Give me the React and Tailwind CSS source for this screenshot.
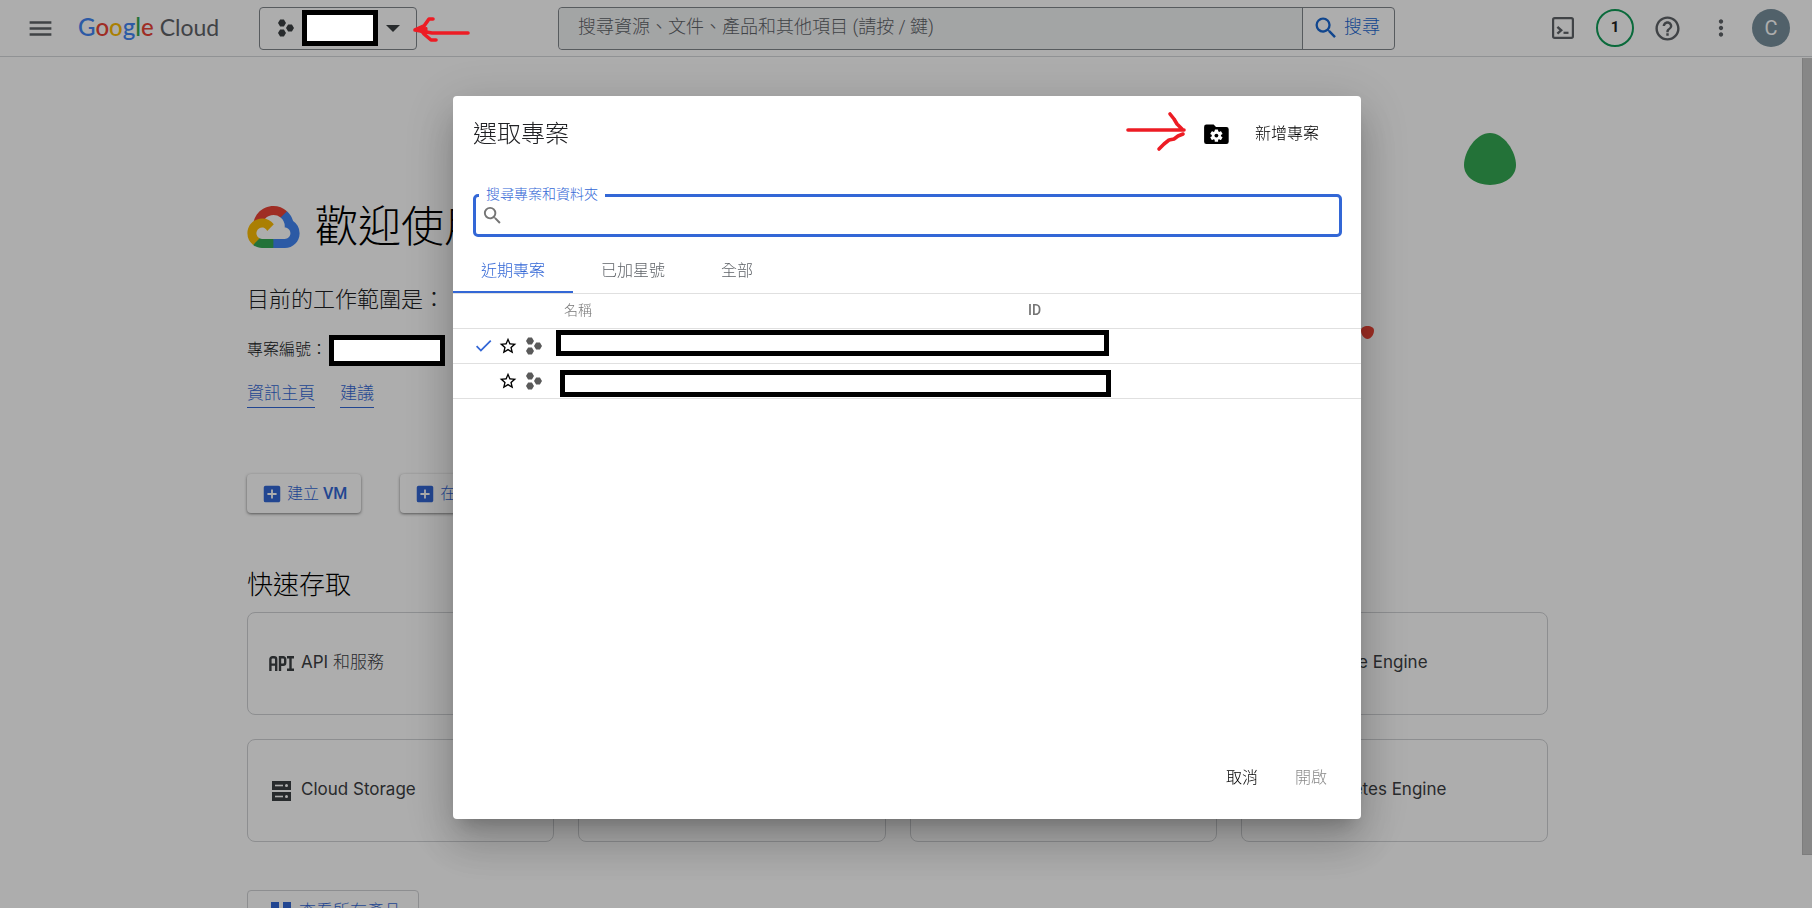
import React from 'react';
import {
  MdMenu,
  MdSearch,
  MdHelpOutline,
  MdMoreVert,
  MdAddBox,
  MdCheck,
  MdStarBorder,
} from 'react-icons/md';

const BLACK_BOX = 'block shrink-0 border-[5px] border-black bg-white';

function HexIcon({ className }) {
  return (
    <svg viewBox="0 0 16 18" className={className} fill="currentColor" aria-hidden="true">
      <path d="M2.1.4h3.8L8 4 5.9 7.6H2.1L0 4z" />
      <path d="M10.1 5.4h3.8L16 9l-2.1 3.6h-3.8L8 9z" />
      <path d="M2.1 10.4h3.8L8 14l-2.1 3.6H2.1L0 14z" />
    </svg>
  );
}

function TerminalIcon() {
  return (
    <svg viewBox="0 0 22 22" className="size-[22px]" fill="none" stroke="currentColor" aria-hidden="true">
      <rect x="1.1" y="1.1" width="19.8" height="19.8" rx="1.6" strokeWidth="2.2" />
      <path d="M5.4 9.8 9.2 13.3 5.4 16.6" strokeWidth="2.4" />
      <path d="M11.5 15.8h5" strokeWidth="2.2" />
    </svg>
  );
}

function FolderGearIcon() {
  return (
    <svg viewBox="0 0 25 21" className="h-[21px] w-[25px]" aria-hidden="true">
      <path d="M2.4.6h7.2L12 3h10.4a2.3 2.3 0 0 1 2.3 2.3v12.4a2.3 2.3 0 0 1-2.3 2.3H2.4A2.3 2.3 0 0 1 .1 17.7V2.9A2.3 2.3 0 0 1 2.4.6z" />
      <g transform="translate(12.4 11.6)" fill="#fff">
        <circle r="4.6" />
        {[0, 60, 120].map((a) => (
          <rect key={a} x="-1.7" y="-6.2" width="3.4" height="12.4" rx="0.5" transform={`rotate(${a})`} />
        ))}
        <circle r="1.9" fill="#000" />
      </g>
    </svg>
  );
}

function CloudLogo() {
  return (
    <svg viewBox="0 0 256 206" className="h-[42px] w-[53px] shrink-0" aria-hidden="true">
      <path fill="#EA4335" d="m170.252 56.819 22.253-22.253 1.483-9.370C153.437-11.677 88.976-7.496 52.420 33.920 42.267 45.423 34.734 59.764 30.717 74.573l7.970-1.123 44.505-7.340 3.436-3.513c19.797-21.742 53.270-24.667 76.128-6.168l7.496.390z" />
      <path fill="#4285F4" d="M224.205 73.918a100.249 100.249 0 0 0-30.217-48.722l-31.232 31.232a55.515 55.515 0 0 1 20.379 44.037v5.544c15.350 0 27.797 12.450 27.797 27.796 0 15.352-12.446 27.573-27.797 27.573h-55.671l-5.466 5.934v33.340l5.466 5.231h55.670c39.930.311 72.553-31.494 72.864-71.424a72.303 72.303 0 0 0-31.793-60.541" />
      <path fill="#34A853" d="M71.870 205.796h55.593V161.290H71.870a27.275 27.275 0 0 1-11.480-2.500l-7.887 2.420-22.409 22.253-1.952 7.574c12.567 9.489 27.980 14.825 43.728 14.759" />
      <path fill="#FBBC05" d="M71.870 61.425C31.943 61.663-.237 94.228.001 134.153a72.301 72.301 0 0 0 28.222 56.880l32.248-32.246c-13.990-6.322-20.208-22.786-13.887-36.776 6.320-13.990 22.786-20.208 36.775-13.888a27.796 27.796 0 0 1 13.887 13.888l32.248-32.248A72.224 72.224 0 0 0 71.870 61.425" />
    </svg>
  );
}

function ApiIcon() {
  return (
    <svg viewBox="0 0 25 15" className="h-[15px] w-[25px]" fill="none" stroke="currentColor" strokeWidth="2.4" aria-hidden="true">
      <path d="M1.4 15V3.2a2 2 0 0 1 2-2h1.8a2 2 0 0 1 2 2V15M1.400 8.600h5.800" />
      <path d="M11 15V1.200h3.200a2 2 0 0 1 2 2v3.600a2 2 0 0 1-2 2H11" />
      <path d="M18 1.200h7M18 13.800h7M21.500 1.200v12.600" />
    </svg>
  );
}

function StorageIcon() {
  return (
    <svg viewBox="0 0 19 20" className="h-5 w-[19px]" aria-hidden="true">
      {[0, 11].map((y) => (
        <g key={y}>
          <path fill="currentColor" d={`M0 ${y}h19v9H0z`} />
          <path fill="#fff" d={`M3 ${y + 3.7}h8v1.6H3z`} />
          <circle fill="#fff" cx="14.5" cy={y + 4.5} r="1.5" />
        </g>
      ))}
    </svg>
  );
}

function Header() {
  return (
    <header className="flex h-[57px] shrink-0 items-center border-b border-[#d5d7da] pr-[22px] pl-[26px] text-[#5f6368]">
      <button type="button" aria-label="選單">
        <MdMenu className="size-[29px]" />
      </button>
      <a href="#" className="ml-[23px] flex w-[181px] items-baseline gap-[6px] pb-[3px] font-['Lato'] text-[24px] leading-8">
        <span className="font-medium">
          <span className="text-[#4285f4]">G</span>
          <span className="text-[#ea4335]">o</span>
          <span className="text-[#fbbc05]">o</span>
          <span className="text-[#4285f4]">g</span>
          <span className="text-[#34a853]">l</span>
          <span className="text-[#ea4335]">e</span>
        </span>
        <span className="text-[23px]">Cloud</span>
      </a>
      <button
        type="button"
        aria-label="選取專案"
        className="relative flex h-[43px] w-[158px] shrink-0 items-center rounded border border-[#80868b] pl-[18px] text-[#3c4043]"
      >
        <HexIcon className="h-[18px] w-4" />
        <span className={`${BLACK_BOX} relative z-20 ml-2 h-9 w-[76px]`} />
        <svg viewBox="0 0 14 7" className="ml-2 h-[7px] w-[14px]" fill="currentColor" aria-hidden="true">
          <path d="M0 0h14L7 7z" />
        </svg>
        <svg
          viewBox="0 0 60 28"
          className="absolute top-2 left-[152px] z-20 h-7 w-[60px]"
          fill="none"
          stroke="#ed1c24"
          strokeWidth="3.6"
          strokeLinecap="round"
          strokeLinejoin="round"
          aria-hidden="true"
        >
          <path d="M56 17 20 17 3 14 12 10M21 3 17 3 12 10 8 13 12 18 19 24 24 24" />
          <path d="M8 11v5l7 1v-5z" fill="#ed1c24" strokeWidth="1" />
        </svg>
      </button>
      <form className="ml-[141px] flex h-[43px] w-[837px] shrink rounded border border-[#80868b]">
        <input
          type="text"
          aria-label="搜尋資源"
          placeholder="搜尋資源、文件、產品和其他項目 (請按 / 鍵)"
          className="min-w-0 flex-1 rounded-l bg-[#f1f3f4] px-[19px] pb-1 text-[18px] font-light outline-none placeholder:text-[#5f6368]"
        />
        <button
          type="button"
          className="flex w-[92px] items-center gap-1 border-l border-[#80868b] pb-px pl-[9px] text-[18px] font-light text-[#1967d2]"
        >
          <MdSearch className="size-7 shrink-0" />
          <span className="pb-[2px]">搜尋</span>
        </button>
      </form>
      <div className="ml-auto flex items-center">
        <button type="button" aria-label="Cloud Shell">
          <TerminalIcon />
        </button>
        <button
          type="button"
          aria-label="通知"
          className="ml-[22px] size-[38px] rounded-full border-2 border-[#0f9d58] pb-px text-[15px] font-bold text-[#202124]"
        >
          1
        </button>
        <button type="button" aria-label="說明" className="ml-[19px]">
          <MdHelpOutline className="size-[29px]" />
        </button>
        <button type="button" aria-label="更多" className="ml-[26px]">
          <MdMoreVert className="size-[26px]" />
        </button>
        <button
          type="button"
          aria-label="帳戶"
          className="ml-[18px] size-[38px] rounded-full bg-[#78909c] text-[20px] text-white"
        >
          C
        </button>
      </div>
    </header>
  );
}

function ActionButton({ children }) {
  return (
    <button
      type="button"
      className="flex h-[39px] items-center gap-1 rounded px-[14px] text-[16px] font-light whitespace-nowrap text-[#3367d6] shadow-[0_1px_3px_rgba(0,0,0,0.5)]"
    >
      <MdAddBox className="size-[22px]" />
      <span>{children}</span>
    </button>
  );
}

const CARDS = [
  { icon: 'api', label: 'API', suffix: '和服務' },
  { label: 'BigQuery' },
  { label: 'SQL' },
  { label: 'Compute Engine' },
  { icon: 'storage', label: 'Cloud Storage' },
  { label: 'VPC', suffix: '網路' },
  { label: 'Cloud Run' },
  { label: 'Kubernetes Engine' },
];

function Card({ icon, label, suffix }) {
  return (
    <a
      href="#"
      className="flex h-[103px] items-center rounded-lg border border-[#d0d2d5] pl-[21px] text-[#3c4043]"
    >
      <span className="flex w-8 justify-start">
        {icon === 'api' && <ApiIcon />}
        {icon === 'storage' && <span className="ml-[3px]"><StorageIcon /></span>}
      </span>
      <span className="pb-1 font-['Inter','Noto_Sans_CJK_TC',sans-serif] text-[17px] leading-6">
        {label}
        {suffix && <span className="font-light"> {suffix}</span>}
      </span>
    </a>
  );
}

function Page() {
  return (
    <main className="relative flex-1 overflow-hidden pr-[7px]">
      <div className="mx-auto w-full max-w-[1301px]">
        <div className="flex items-center gap-[15px] pt-[138px]">
          <CloudLogo />
          <h1 className="text-[43px] leading-[64px] font-light text-black">歡迎使用</h1>
        </div>
        <p className="mt-[25px] text-[22px] leading-8 font-light text-[#202124]">目前的工作範圍是：</p>
        <div className="mt-[18px] flex h-8 items-center text-[16px] font-light text-[#202124]">
          <span className="w-[82px] whitespace-nowrap">專案編號：</span>
          <span className={`${BLACK_BOX} relative z-20 h-[31px] w-[116px]`} />
        </div>
        <div className="mt-[13px] flex gap-[25px] text-[17px] leading-7 font-light text-[#3367d6]">
          <a href="#" className="border-b border-[#3367d6]">資訊主頁</a>
          <a href="#" className="border-b border-[#3367d6]">建議</a>
        </div>
        <div className="mt-[66px] flex gap-[39px]">
          <ActionButton>建立 <b className="font-medium">VM</b></ActionButton>
          <ActionButton>在 <b className="font-medium">BigQuery</b> 中執行查詢</ActionButton>
        </div>
        <h2 className="mt-[52px] text-[26px] leading-10 font-light text-black">快速存取</h2>
        <div className="mt-[7px] grid grid-cols-4 gap-6">
          {CARDS.map((c) => (
            <Card key={c.label} {...c} />
          ))}
        </div>
        <a
          href="#"
          className="mt-12 inline-flex h-11 items-center gap-2 rounded border border-[#d0d2d5] pr-[17px] pl-[23px] text-[17px] font-light whitespace-nowrap text-[#3367d6]"
        >
          <svg viewBox="0 0 20 20" className="size-5" fill="currentColor" aria-hidden="true">
            <path d="M0 0h8v8H0zM12 0h8v8h-8zM0 12h8v8H0zM12 12h8v8h-8z" />
          </svg>
          查看所有產品
        </a>
      </div>
      <svg viewBox="0 0 51 51" className="absolute top-[76px] left-[1464px] size-[52px]" aria-hidden="true">
        <path fill="#34a853" d="M25.5 0C39 0 51 18 51 31.500 51 43.500 39 51 25.500 51S0 43.500 0 31.500C0 18 12 0 25.500 0z" />
      </svg>
      <svg viewBox="0 0 13 13" className="absolute top-[269px] left-[1361px] size-[13px]" aria-hidden="true">
        <path fill="#ea4335" d="M6.500 13C3 13 0 8.500 0 4.500 0 1.500 3 0 6.500 0S13 1.500 13 4.500C13 8.500 10 13 6.500 13z" />
      </svg>
    </main>
  );
}

const ROWS = [
  { id: 'first', selected: true, box: 'h-[26px] w-[553px]', cell: 'pt-px align-top' },
  { id: 'second', selected: false, box: 'ml-1 h-[27px] w-[551px]', cell: 'pb-px align-bottom' },
];

function ProjectDialog() {
  return (
    <div
      role="dialog"
      aria-labelledby="dialog-title"
      className="flex h-full w-[908px] max-w-full flex-col rounded bg-white shadow-[0_12px_17px_-8px_rgba(0,0,0,0.2),0_26px_42px_3px_rgba(0,0,0,0.14),0_10px_51px_9px_rgba(0,0,0,0.12)]"
    >
      <div className="flex items-center px-5 pt-[18px]">
        <h2 id="dialog-title" className="text-[24px] leading-10 font-light text-[#202124]">選取專案</h2>
        <div className="mr-[17px] ml-auto h-10">
          <svg
            viewBox="0 0 64 42"
            className="h-[42px] w-16 -translate-y-1"
            fill="none"
            stroke="#ed1c24"
            strokeWidth="3.6"
            strokeLinecap="round"
            strokeLinejoin="round"
            aria-hidden="true"
          >
            <path d="M5 20H61M47 4 51 9 54 14 59 19M36 39 41 34 46 30 51 29 55 26 60 24" />
          </svg>
        </div>
        <FolderGearIcon />
        <button type="button" className="mr-[22px] ml-[26px] text-[16px] font-light text-black">新增專案</button>
      </div>
      <div className="relative mt-10 mr-[19px] ml-5 flex h-[43px] items-center rounded-[5px] border-[3px] border-[#3367d6] pl-[5px]">
        <label
          htmlFor="project-search"
          className="absolute -top-[13px] left-[3px] bg-white px-[7px] text-[14px] leading-5 font-light text-[#3367d6]"
        >
          搜尋專案和資料夾
        </label>
        <MdSearch className="size-[23px] text-[#757575]" />
        <input id="project-search" type="text" className="h-full min-w-0 flex-1 bg-transparent px-2 outline-none" />
      </div>
      <div role="tablist" className="mt-[14px] flex h-[43px] border-b border-[#e0e0e0] text-[16px] font-light text-[#5f6368]">
        <button type="button" role="tab" aria-selected="true" className="border-b-2 border-[#3367d6] px-7 text-[#3367d6]">近期專案</button>
        <button type="button" role="tab" aria-selected="false" className="border-b-2 border-transparent px-7">已加星號</button>
        <button type="button" role="tab" aria-selected="false" className="border-b-2 border-transparent px-7">全部</button>
      </div>
      <table className="w-full table-fixed border-collapse">
        <thead>
          <tr className="h-[34px] border-b border-[#e0e0e0] text-left text-[14px] text-[#757575]">
            <th className="w-[103px] p-0" aria-label="狀態" />
            <th className="w-[472px] p-0 pl-2 font-light">名稱</th>
            <th className="p-0 font-medium">ID</th>
          </tr>
        </thead>
        <tbody>
          {ROWS.map((row) => (
            <tr key={row.id} className="h-[35px] border-b border-[#e0e0e0]">
              <td className="p-0 pl-5">
                <div className="flex items-center">
                  <span className="w-[25px] text-[#3367d6]">{row.selected && <MdCheck className="size-[21px]" />}</span>
                  <button type="button" aria-label="加星號" className="text-black">
                    <MdStarBorder className="size-5" />
                  </button>
                  <HexIcon className="ml-2 h-[18px] w-4 text-[#5a5a5a]" />
                </div>
              </td>
              <td colSpan={2} className={`p-0 ${row.cell}`}>
                <span className={`${BLACK_BOX} ${row.box}`} />
              </td>
            </tr>
          ))}
        </tbody>
      </table>
      <div className="mt-auto flex justify-end gap-[37px] pr-[34px] pb-[29px] text-[16px] leading-6 font-light">
        <button type="button" className="text-black">取消</button>
        <button type="button" disabled className="text-[#8a8a8a]">開啟</button>
      </div>
    </div>
  );
}

export default function App() {
  return (
    <div className="flex h-screen flex-col overflow-hidden bg-white font-['Roboto','Noto_Sans_CJK_TC',sans-serif]">
      <Header />
      <div className="flex min-h-0 flex-1">
        <Page />
        <div className="mt-px w-[10px] shrink-0">
          <div className="h-[797px] border-b border-l border-[#b8b8b8] bg-[#c8c8c8]" />
        </div>
      </div>
      <div className="fixed inset-0 z-10 bg-black/[0.32]" />
      <div className="fixed inset-0 z-10 flex justify-center pt-24 pb-[89px] pl-[2px]">
        <ProjectDialog />
      </div>
    </div>
  );
}
